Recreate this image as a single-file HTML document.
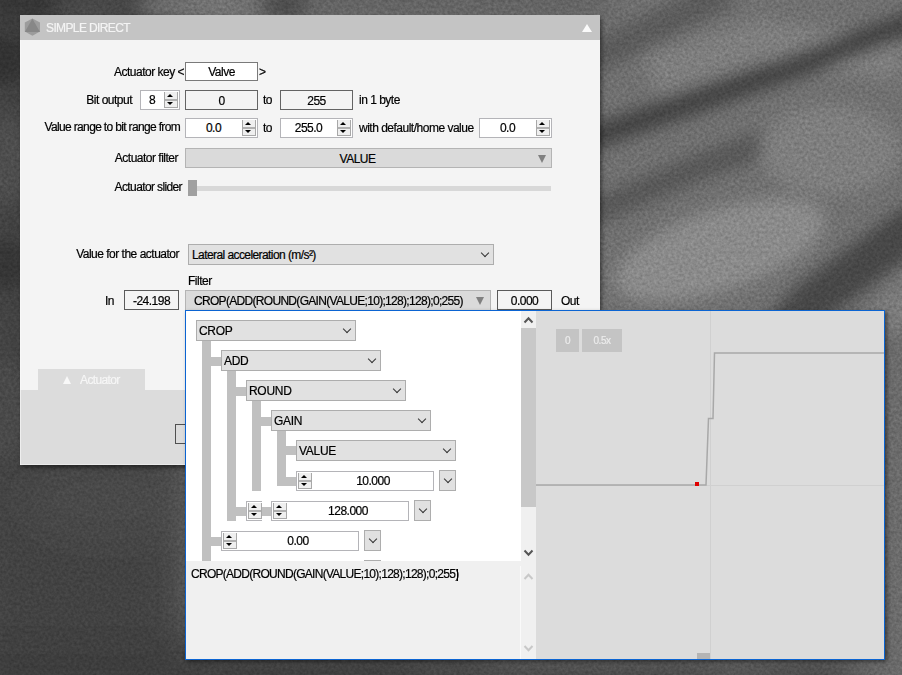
<!DOCTYPE html>
<html><head><meta charset="utf-8">
<style>
*{box-sizing:border-box;margin:0;padding:0}
html,body{width:902px;height:675px;overflow:hidden;background:#4a4a4a}
body{position:relative;font-family:"Liberation Sans",sans-serif;font-size:12px;color:#000}
.a{position:absolute}
.t{position:absolute;white-space:nowrap;line-height:14px;letter-spacing:-0.5px;-webkit-text-stroke:0.2px currentColor}
.r{text-align:right}
.c{text-align:center}
.box{position:absolute;border:1px solid #7a7a7a;background:#fff}
.sp{position:absolute;border:1px solid #b4b4b8;background:#fff}
.sb{position:absolute;width:14px;border:1px solid #a8a8a8;border-top:none;background:#efefef}
.sb:before{content:"";position:absolute;left:2px;top:2px;border-left:3px solid transparent;border-right:3px solid transparent;border-bottom:3px solid #000}
.sb:after{content:"";position:absolute;left:2px;bottom:2px;border-left:3px solid transparent;border-right:3px solid transparent;border-top:3px solid #000}
.sb i{position:absolute;left:0;right:0;top:7px;height:1.5px;background:#b0b0b0}
.cb{position:absolute;border:1px solid #adadad;background:#e1e1e1}
.tl{position:absolute;background:#c0c0c0}
.chev{position:absolute;width:7px;height:7px;border-right:1.3px solid #333;border-bottom:1.3px solid #333;transform:rotate(45deg)}
</style></head><body>
<svg id="bg" class="a" style="left:0;top:0" width="902" height="675" viewBox="0 0 902 675">
<defs>
<filter id="bl" x="-20%" y="-20%" width="140%" height="140%"><feGaussianBlur stdDeviation="8"/></filter>
<filter id="bl2" x="-20%" y="-20%" width="140%" height="140%"><feGaussianBlur stdDeviation="20"/></filter>
<filter id="nz" x="0" y="0" width="100%" height="100%" color-interpolation-filters="sRGB"><feTurbulence type="fractalNoise" baseFrequency="0.35" numOctaves="2" seed="7"/><feColorMatrix type="matrix" values="1 0 0 0 0  1 0 0 0 0  1 0 0 0 0  0 0 0 0 1"/></filter>
</defs>
<rect width="902" height="675" fill="#707070"/>
<g filter="url(#bl2)">
<rect x="-40" y="-40" width="230" height="740" fill="#424242"/>
<rect x="-40" y="640" width="520" height="80" fill="#3c3c3c"/>
<rect x="480" y="655" width="460" height="60" fill="#454545"/><ellipse cx="740" cy="672" rx="40" ry="8" fill="#5a5a5a"/><ellipse cx="440" cy="672" rx="30" ry="8" fill="#555"/>
<rect x="860" y="300" width="80" height="400" fill="#6a6a6a"/>
<rect x="250" y="-20" width="360" height="34" fill="#5c5c5c"/>
<rect x="-40" y="-40" width="130" height="60" fill="#323232"/>
<ellipse cx="110" cy="500" rx="90" ry="40" fill="#4a4a4a"/>
</g>
<g filter="url(#bl)">
<ellipse cx="5" cy="60" rx="25" ry="25" fill="#303030"/>
<ellipse cx="5" cy="160" rx="25" ry="45" fill="#4e4e4e"/>
<ellipse cx="5" cy="265" rx="25" ry="25" fill="#363636"/>
<ellipse cx="5" cy="410" rx="25" ry="50" fill="#4a4a4a"/>
<ellipse cx="195" cy="6" rx="60" ry="12" fill="#737373"/>
<ellipse cx="285" cy="6" rx="22" ry="12" fill="#4a4a4a"/>
<ellipse cx="90" cy="8" rx="40" ry="14" fill="#484848"/>
<path d="M590,60 L650,30 L730,-10" stroke="#5a5a5a" stroke-width="30" fill="none"/>
<path d="M650,75 L760,40 L902,60" stroke="#7e7e7e" stroke-width="40" fill="none"/>
<path d="M580,142 L700,100 L790,68 L920,20" stroke="#434343" stroke-width="24" fill="none"/>
<path d="M580,218 L700,167 L770,142" stroke="#575757" stroke-width="26" fill="none"/>
<ellipse cx="720" cy="250" rx="110" ry="40" fill="#8a8a8a" transform="rotate(-18 720 250)"/>
<ellipse cx="830" cy="150" rx="70" ry="45" fill="#7e7e7e"/>
<path d="M770,345 L815,300 L920,222" stroke="#464646" stroke-width="44" fill="none"/>
<ellipse cx="905" cy="305" rx="40" ry="22" fill="#7a7a7a" transform="rotate(-35 905 305)"/>
</g>
<rect width="902" height="675" filter="url(#nz)" opacity="0.2" style="mix-blend-mode:overlay"/>
</svg>

<!-- main panel -->
<div class="a" style="left:20px;top:15px;width:580px;height:450px;background:#f4f4f4;box-shadow:2px 3px 4px rgba(0,0,0,.45)"></div>
<div class="a" style="left:20px;top:15px;width:580px;height:25px;background:#c4c4c4"></div>
<svg class="a" style="left:20px;top:15px" width="25" height="25" viewBox="20 15 25 25">
<polygon points="32.4,18.5 40,22.6 40,31.6 32.4,35.8 24.8,31.6 24.8,22.6" fill="#9c9c9c"/>
<polygon points="32.4,18.7 40,32 24.8,32" fill="#878787"/>
</svg>
<div class="t" style="left:46px;top:21px;color:#f4f4f4;letter-spacing:-0.62px">SIMPLE DIRECT</div>
<div class="a" style="left:582px;top:24px;width:0;height:0;border-left:5px solid transparent;border-right:5px solid transparent;border-bottom:8px solid #fafafa"></div>

<!-- row 1 -->
<div class="t r" style="left:0;width:184px;top:65px">Actuator key &lt;</div>
<div class="box" style="left:185px;top:62px;width:73px;height:19px"></div>
<div class="t c" style="left:185px;width:73px;top:65px">Valve</div>
<div class="t" style="left:259px;top:65px">&gt;</div>

<!-- row 2 -->
<div class="t r" style="left:0;width:132px;top:93px">Bit output</div>
<div class="sp" style="left:140px;top:90px;width:40px;height:20px"></div>
<div class="t" style="left:149px;top:93px">8</div>
<div class="sb" style="left:164px;top:92px;height:16px"><i></i></div>
<div class="box" style="left:185px;top:90px;width:73px;height:20px;border-color:#646464;background:#f4f4f4"></div>
<div class="t c" style="left:185px;width:73px;top:94px">0</div>
<div class="t" style="left:263px;top:93px">to</div>
<div class="box" style="left:280px;top:90px;width:73px;height:20px;border-color:#646464;background:#f4f4f4"></div>
<div class="t c" style="left:280px;width:73px;top:94px">255</div>
<div class="t" style="left:359px;top:93px">in 1 byte</div>

<!-- row 3 -->
<div class="t r" style="left:0;width:180px;top:120px;letter-spacing:-0.66px">Value range to bit range from</div>
<div class="sp" style="left:185px;top:118px;width:73px;height:20px"></div>
<div class="t c" style="left:185px;width:57px;top:121px">0.0</div>
<div class="sb" style="left:242px;top:120px;height:16px"><i></i></div>
<div class="t" style="left:263px;top:121px">to</div>
<div class="sp" style="left:280px;top:118px;width:73px;height:20px"></div>
<div class="t c" style="left:280px;width:57px;top:121px">255.0</div>
<div class="sb" style="left:337px;top:120px;height:16px"><i></i></div>
<div class="t" style="left:359px;top:121px">with default/home value</div>
<div class="sp" style="left:479px;top:118px;width:73px;height:20px"></div>
<div class="t c" style="left:479px;width:57px;top:121px">0.0</div>
<div class="sb" style="left:536px;top:120px;height:16px"><i></i></div>

<!-- row 4 -->
<div class="t r" style="left:0;width:178px;top:151px">Actuator filter</div>
<div class="cb" style="left:185px;top:148px;width:367px;height:20px;background:#dadada;border-color:#b4b4b4"></div>
<div class="t c" style="left:185px;width:345px;top:152px">VALUE</div>
<div class="a" style="left:538px;top:155px;width:0;height:0;border-left:4.5px solid transparent;border-right:4.5px solid transparent;border-top:8px solid #808080"></div>

<!-- row 5 -->
<div class="t r" style="left:0;width:182px;top:180px;letter-spacing:-0.62px">Actuator slider</div>
<div class="a" style="left:197px;top:186px;width:354px;height:5px;background:#d8d8d8"></div>
<div class="a" style="left:188px;top:180px;width:9px;height:16px;background:#a0a0a0"></div>

<!-- row 6 -->
<div class="t r" style="left:0;width:179px;top:247px">Value for the actuator</div>
<div class="cb" style="left:188px;top:244px;width:306px;height:21px"></div>
<div class="t" style="left:192px;top:248px;letter-spacing:-0.58px">Lateral acceleration (m/s²)</div>
<div class="chev" style="left:482px;top:250px;width:6px;height:6px;border-width:0 1.2px 1.2px 0"></div>

<div class="t" style="left:188px;top:274px">Filter</div>
<div class="t" style="left:105px;top:294px">In</div>
<div class="box" style="left:124px;top:290px;width:55px;height:20px;border-color:#5a5a5a;background:#f4f4f4"></div>
<div class="t c" style="left:124px;width:55px;top:294px">-24.198</div>
<div class="cb" style="left:185px;top:290px;width:306px;height:21px;background:#dadada;border-color:#b4b4b4"></div>
<div class="t" style="left:194px;top:294px;letter-spacing:-0.69px">CROP(ADD(ROUND(GAIN(VALUE;10);128);128);0;255)</div>
<div class="a" style="left:476px;top:297px;width:0;height:0;border-left:4.5px solid transparent;border-right:4.5px solid transparent;border-top:8px solid #808080"></div>
<div class="box" style="left:497px;top:290px;width:55px;height:20px;border-color:#5a5a5a;background:#f4f4f4"></div>
<div class="t c" style="left:497px;width:55px;top:294px">0.000</div>
<div class="t" style="left:561px;top:294px">Out</div>

<!-- bottom tab area -->
<div class="a" style="left:38px;top:369px;width:107px;height:21px;background:#dcdcdc"></div>
<div class="a" style="left:20px;top:390px;width:580px;height:75px;background:#dcdcdc"></div>
<div class="a" style="left:63px;top:376px;width:0;height:0;border-left:4.5px solid transparent;border-right:4.5px solid transparent;border-bottom:8px solid #f8f8f8"></div>
<div class="t" style="left:80px;top:373px;color:#f6f6f6;letter-spacing:-0.62px">Actuator</div>
<div class="a" style="left:175px;top:424px;width:20px;height:20px;border:1.5px solid #505050"></div>
<div class="a" style="left:20px;top:40px;width:1px;height:425px;background:#fafafa;opacity:.6"></div>
<div class="a" style="left:20px;top:464px;width:165px;height:1px;background:#f0f0f0;opacity:.7"></div>

<!-- popup -->
<div class="a" style="left:185px;top:310px;width:700px;height:350px;border:1px solid #0b64d2;background:#dcdcdc;box-shadow:2px 2px 4px rgba(0,0,0,.45)"></div>
<div id="tree" class="a" style="left:186px;top:311px;width:335px;height:250px;background:#fff;overflow:hidden">
<div class="tl" style="left:16px;top:30px;width:9px;height:220px"></div>
<div class="tl" style="left:25px;top:46px;width:10px;height:9px"></div>
<div class="tl" style="left:25px;top:226px;width:10px;height:9px"></div>
<div class="tl" style="left:41px;top:60px;width:9px;height:150px"></div>
<div class="tl" style="left:50px;top:76px;width:10px;height:9px"></div>
<div class="tl" style="left:50px;top:196px;width:10px;height:9px"></div>
<div class="tl" style="left:66px;top:90px;width:9px;height:90px"></div>
<div class="tl" style="left:75px;top:106px;width:10px;height:9px"></div>
<div class="tl" style="left:75px;top:196px;width:10px;height:9px"></div>
<div class="tl" style="left:91px;top:120px;width:9px;height:55px"></div>
<div class="tl" style="left:100px;top:135px;width:10px;height:9px"></div>
<div class="tl" style="left:100px;top:166px;width:10px;height:9px"></div>
<div class="cb" style="left:10px;top:9px;width:160px;height:21px"></div>
<div class="t" style="left:13px;top:13px;letter-spacing:-0.3px">CROP</div>
<div class="chev" style="left:158px;top:15px;width:6px;height:6px;border-width:0 1.2px 1.2px 0"></div>
<div class="cb" style="left:35px;top:39px;width:160px;height:21px"></div>
<div class="t" style="left:38px;top:43px;letter-spacing:-0.3px">ADD</div>
<div class="chev" style="left:183px;top:45px;width:6px;height:6px;border-width:0 1.2px 1.2px 0"></div>
<div class="cb" style="left:60px;top:69px;width:160px;height:21px"></div>
<div class="t" style="left:63px;top:73px;letter-spacing:-0.3px">ROUND</div>
<div class="chev" style="left:208px;top:75px;width:6px;height:6px;border-width:0 1.2px 1.2px 0"></div>
<div class="cb" style="left:85px;top:99px;width:160px;height:21px"></div>
<div class="t" style="left:88px;top:103px;letter-spacing:-0.3px">GAIN</div>
<div class="chev" style="left:233px;top:105px;width:6px;height:6px;border-width:0 1.2px 1.2px 0"></div>
<div class="cb" style="left:110px;top:129px;width:160px;height:21px"></div>
<div class="t" style="left:113px;top:133px;letter-spacing:-0.3px">VALUE</div>
<div class="chev" style="left:258px;top:135px;width:6px;height:6px;border-width:0 1.2px 1.2px 0"></div>
<div class="sp" style="left:110px;top:160px;width:138px;height:20px"></div>
<div class="sb" style="left:112px;top:162px;width:14px;height:16px"><i></i></div>
<div class="t c" style="left:126px;width:122px;top:163px">10.000</div>
<div class="cb" style="left:253px;top:159px;width:17px;height:21px"></div>
<div class="chev" style="left:259px;top:165px;width:6px;height:6px;border-width:0 1.2px 1.2px 0"></div>
<div class="sp" style="left:85px;top:190px;width:138px;height:20px"></div>
<div class="sb" style="left:87px;top:192px;width:14px;height:16px"><i></i></div>
<div class="t c" style="left:101px;width:122px;top:193px">128.000</div>
<div class="cb" style="left:228px;top:189px;width:17px;height:21px"></div>
<div class="chev" style="left:234px;top:195px;width:6px;height:6px;border-width:0 1.2px 1.2px 0"></div>
<div class="sp" style="left:35px;top:220px;width:138px;height:20px"></div>
<div class="sb" style="left:37px;top:222px;width:14px;height:16px"><i></i></div>
<div class="t c" style="left:51px;width:122px;top:223px">0.00</div>
<div class="cb" style="left:178px;top:219px;width:17px;height:21px"></div>
<div class="chev" style="left:184px;top:225px;width:6px;height:6px;border-width:0 1.2px 1.2px 0"></div>
<div class="sp" style="left:60px;top:190px;width:16px;height:20px;border-right:none"></div>
<div class="sb" style="left:62px;top:192px;width:14px;height:16px"><i></i></div>
<div class="cb" style="left:178px;top:249px;width:17px;height:21px"></div>
</div><!--/tree-->
<div class="a" style="left:521px;top:311px;width:15px;height:250px;background:#f0f0f0"></div>
<div class="a" style="left:521px;top:328px;width:15px;height:179px;background:#c8c8c8"></div>

<div class="a" style="left:186px;top:561px;width:350px;height:98px;background:#f0f0f0"></div>
<div class="a" style="left:520px;top:566px;width:1px;height:93px;background:#fafafa"></div>

<svg class="a" style="left:0;top:0;overflow:visible" width="1" height="1">
<polyline points="524.5,322.5 528.5,318.2 532.5,322.5" fill="none" stroke="#555" stroke-width="2"/>
<polyline points="524.5,550.5 528.5,554.8 532.5,550.5" fill="none" stroke="#555" stroke-width="2"/>
<polyline points="524.5,579 528.5,574.7 532.5,579" fill="none" stroke="#c8c8c8" stroke-width="2"/>
<polyline points="524.5,646 528.5,650.3 532.5,646" fill="none" stroke="#c8c8c8" stroke-width="2"/>
</svg>
<div class="t" style="left:191px;top:567px;letter-spacing:-0.72px">CROP(ADD(ROUND(GAIN(VALUE;10);128);128);0;255)</div>
<div class="a" style="left:457px;top:569px;width:1px;height:12px;background:#000"></div>

<!-- graph -->
<div class="a" style="left:710px;top:311px;width:1px;height:348px;background:#d0d0d0"></div>
<div class="a" style="left:536px;top:485px;width:348px;height:1px;background:#d0d0d0"></div>
<div class="a" style="left:556px;top:329px;width:23px;height:23px;background:#c4c4c4"></div>
<div class="t c" style="left:556px;width:23px;top:334px;color:#ececec;font-size:10px">0</div>
<div class="a" style="left:582px;top:329px;width:40px;height:23px;background:#c4c4c4"></div>
<div class="t c" style="left:582px;width:40px;top:334px;color:#ececec;font-size:10px">0.5x</div>
<svg class="a" style="left:0;top:0" width="902" height="675">
<polyline points="536,485 706,485 708.5,418.5 713,418.5 714.5,353 884,353" fill="none" stroke="#a8a8a8" stroke-width="1.5"/>
<rect x="695" y="482" width="4" height="4" fill="#e00000"/>
</svg>
<div class="a" style="left:697px;top:653px;width:13px;height:6px;background:#b4b4b4"></div>
</body></html>
